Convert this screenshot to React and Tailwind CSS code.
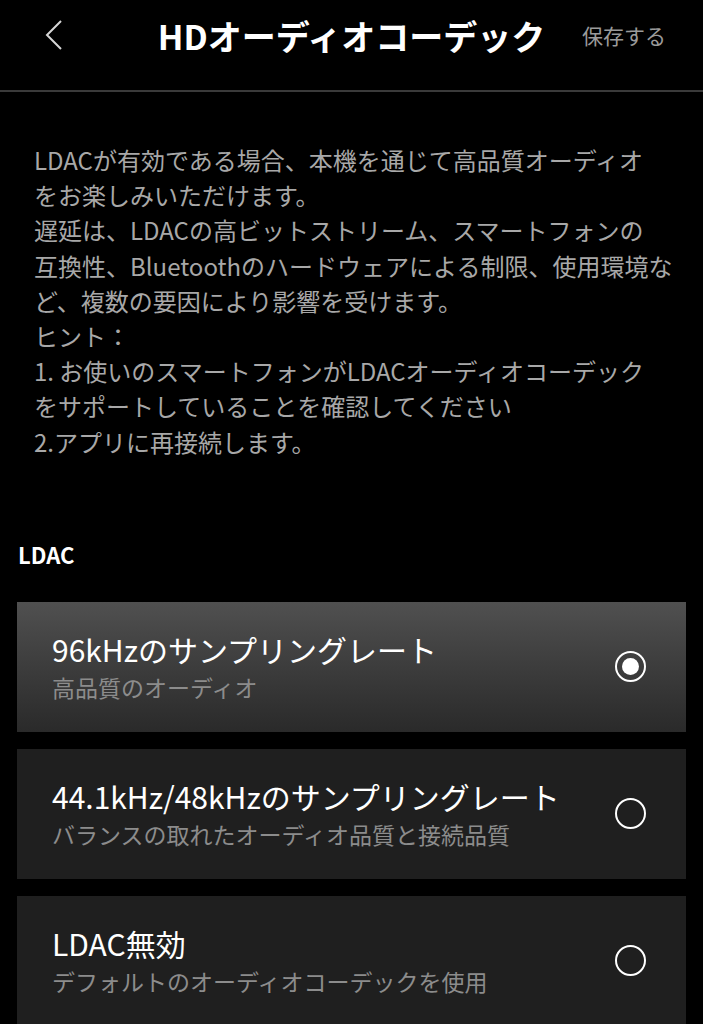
import React from "react";

const intro = [
  "LDACが有効である場合、本機を通じて高品質オーディオ",
  "をお楽しみいただけます。",
  "遅延は、LDACの高ビットストリーム、スマートフォンの",
  "互換性、Bluetoothのハードウェアによる制限、使用環境な",
  "ど、複数の要因により影響を受けます。",
  "ヒント：",
  "1. お使いのスマートフォンがLDACオーディオコーデック",
  "をサポートしていることを確認してください",
  "2.アプリに再接続します。",
];

const options = [
  { title: "96kHzのサンプリングレート", sub: "高品質のオーディオ", selected: true },
  { title: "44.1kHz/48kHzのサンプリングレート", sub: "バランスの取れたオーディオ品質と接続品質", selected: false },
  { title: "LDAC無効", sub: "デフォルトのオーディオコーデックを使用", selected: false },
];

function Radio({ on }) {
  return (
    <div className="w-[31px] h-[31px] rounded-full border-2 border-white flex items-center justify-center shrink-0">
      {on && <div className="w-[17px] h-[17px] rounded-full bg-white" />}
    </div>
  );
}

export default function App() {
  return (
    <div
      className="w-[703px] h-[1024px] overflow-hidden bg-black text-white"
      style={{ fontFamily: '"Noto Sans CJK JP", "Noto Sans", sans-serif' }}
    >
      {/* header */}
      <div className="relative h-[70px] flex items-center justify-center">
        <svg
          className="absolute left-[44px] top-[20px]"
          width="20"
          height="30"
          viewBox="0 0 20 30"
          fill="none"
          stroke="#d6d6d6"
          strokeWidth="2"
        >
          <polyline points="17,1 3,15 17,29" />
        </svg>
        <h1 className="text-[34px] font-bold">HDオーディオコーデック</h1>
        <span className="absolute right-[37px] top-[20px] text-[21px] text-[#9b9b9b]">保存する</span>
      </div>
      <div className="mt-[20px] h-[2px] bg-[#3a3a3a]" />

      {/* description */}
      <div className="pt-[50px] pl-[34px] text-[24px] leading-[35.2px] text-[#a8a8a8]">
        {intro.map((l, i) => (
          <div key={i} className="whitespace-nowrap">
            {l}
          </div>
        ))}
      </div>

      <div className="mt-[80px] pl-[18px] text-[22px] font-bold leading-[30px]">LDAC</div>

      <div className="mt-[33px] mx-[17px] flex flex-col gap-[17px]">
        {options.map((o, i) => (
          <div
            key={i}
            className={
              "h-[130px] flex items-center justify-between pl-[35px] pr-[40px] " +
              (o.selected ? "bg-gradient-to-b from-[#505050] to-[#2a2a2a]" : "bg-[#1f1f1f]")
            }
          >
            <div className="pt-[2px]">
              <div className="text-[30px] leading-[38px] text-white whitespace-nowrap">{o.title}</div>
              <div className="text-[23px] leading-[38px] text-[#8c8c8c] whitespace-nowrap">{o.sub}</div>
            </div>
            <Radio on={o.selected} />
          </div>
        ))}
      </div>
    </div>
  );
}
